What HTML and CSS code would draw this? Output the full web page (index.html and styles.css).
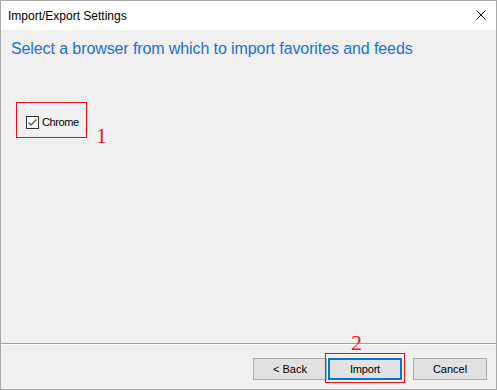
FILE: index.html
```html
<!DOCTYPE html>
<html>
<head>
<meta charset="utf-8">
<link rel="stylesheet" href="styles.css">
</head>
<body>
<div class="window">
  <div class="titlebar">
    <span class="title">Import/Export Settings</span>
    <svg class="close" width="10" height="10" viewBox="0 0 10 10"><path d="M0.5 0.5 L9.5 9.5 M9.5 0.5 L0.5 9.5" stroke="#000" stroke-width="1" fill="none"/></svg>
  </div>
  <div class="content">
    <h1 class="heading">Select a browser from which to import favorites and feeds</h1>
    <div class="options">
      <div class="highlight">
        <label class="check">
          <span class="box"><svg width="11" height="11" viewBox="0 0 11 11"><path d="M1.5 5.5 L4 8 L9.5 2.5" stroke="#555" stroke-width="1.3" fill="none"/></svg></span>
          <span class="check-label">Chrome</span>
        </label>
      </div>
      <span class="note note-one">1</span>
    </div>
  </div>
  <div class="footer">
    <button class="btn">&lt; Back</button>
    <span class="import-wrap">
      <span class="note note-two">2</span>
      <button class="btn btn-focus">Import</button>
    </span>
    <button class="btn btn-cancel">Cancel</button>
  </div>
</div>
</body>
</html>
```

FILE: styles.css
```css
* { box-sizing: border-box; }
html, body { margin: 0; padding: 0; background: #f0f0f0; }
.window {
  width: 497px;
  height: 390px;
  border: 1px solid #a9a9a9;
  display: flex;
  flex-direction: column;
  background: #f0f0f0;
  font-family: "Liberation Sans", Arial, sans-serif;
}
.titlebar {
  height: 29px;
  background: #fff;
  display: flex;
  align-items: center;
  justify-content: space-between;
  padding: 0 10px 0 7px;
  flex: none;
}
.title {
  font-size: 12px;
  color: #000;
  line-height: 14px;
  margin-top: 1px;
}
.close { display: block; margin-top: -1px; }
.content {
  flex: 1;
  padding: 0 0 0 0;
}
.heading {
  margin: 9px 0 0 10px;
  font-size: 16px;
  line-height: 20px;
  font-weight: normal;
  color: #1c6fd6;
  letter-spacing: -0.1px;
}
.options {
  position: relative;
  margin: 43px 0 0 15px;
  display: flex;
  align-items: flex-start;
}
.highlight {
  width: 71px;
  height: 36px;
  border: 1px solid #f01010;
  padding: 13px 0 0 9px;
}
.check {
  display: flex;
  align-items: center;
  gap: 3px;
  font-size: 11px;
  color: #000;
  letter-spacing: -0.4px;
}
.box {
  width: 13px;
  height: 13px;
  border: 1px solid #333;
  background: #fff;
  display: flex;
  align-items: center;
  justify-content: center;
}
.box svg { display: block; }
.check-label { line-height: 13px; }
.note {
  font-family: "Liberation Serif", "Times New Roman", serif;
  color: #f01818;
  font-size: 22px;
  line-height: 22px;
}
.note-one {
  margin: 23px 0 0 9px;
}
.footer {
  flex: none;
  height: 46px;
  border-top: 1px solid #a0a0a0;
  box-shadow: inset 0 1px 0 #fff;
  display: flex;
  justify-content: flex-end;
  align-items: flex-start;
  padding: 14px 9px 0 0;
}
.btn {
  width: 74px;
  height: 22px;
  background: #e1e1e1;
  border: 1px solid #adadad;
  font-family: "Liberation Sans", Arial, sans-serif;
  font-size: 11px;
  color: #000;
  padding: 0;
  margin: 0;
}
.import-wrap {
  position: relative;
  margin-left: 1px;
  display: flex;
}
.import-wrap::before {
  content: "";
  position: absolute;
  left: -3px;
  right: -3px;
  top: -5px;
  bottom: -3px;
  border: 1px solid #f01010;
}
.btn-focus {
  border: 2px solid #0078d7;
  letter-spacing: -0.2px;
}
.note-two {
  position: absolute;
  left: 23px;
  top: -26px;
}
.btn-cancel { margin-left: 11px; }
```
